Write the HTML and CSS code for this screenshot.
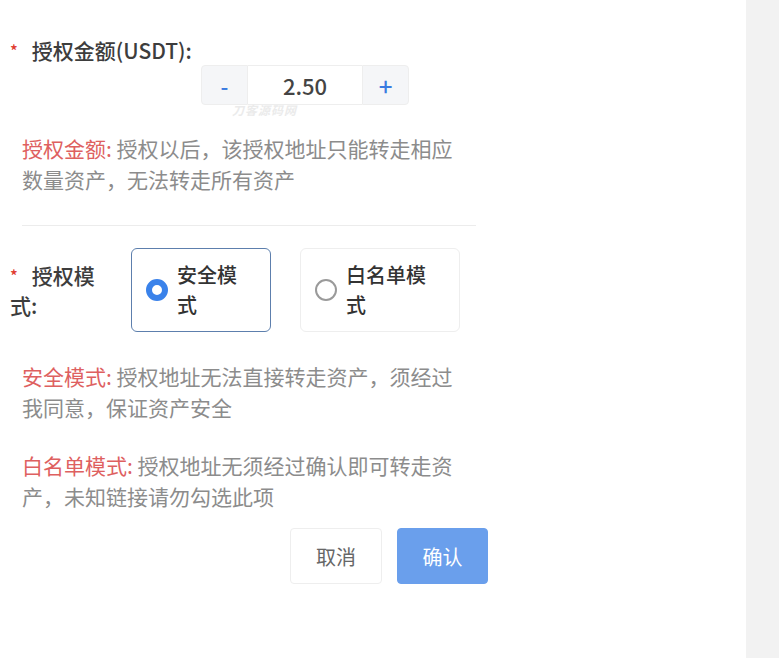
FILE: index.html
```html
<!DOCTYPE html>
<html lang="zh-CN">
<head>
    <meta charset="UTF-8">
    <title>授权</title>
    <meta name="viewport" content="width=device-width, initial-scale=1.0">
    <link rel="stylesheet" href="styles.css">
</head>
<body>

<div class="page">
    <div class="panel">

        <div class="form-item">
            <div class="label"><span class="star">*</span>授权金额(USDT):</div>
            <div class="stepper">
                <button class="step-btn minus">-</button>
                <div class="step-value">2.50</div>
                <button class="step-btn plus">+</button>
            </div>
            <div class="watermark">刀客源码网</div>
        </div>

        <p class="tip"><span class="tip-key">授权金额:</span> 授权以后，该授权地址只能转走相应数量资产，无法转走所有资产</p>

        <div class="divider"></div>

        <div class="form-row">
            <div class="label label-side"><span class="star">*</span>授权模式:</div>
            <div class="radio-group">
                <div class="radio-card checked">
                    <span class="radio-dot"></span>
                    <span class="radio-text">安全模式</span>
                </div>
                <div class="radio-card wide">
                    <span class="radio-dot"></span>
                    <span class="radio-text">白名单模式</span>
                </div>
            </div>
        </div>

        <p class="tip tip-mode"><span class="tip-key">安全模式:</span> 授权地址无法直接转走资产，须经过我同意，保证资产安全</p>

        <p class="tip tip-white"><span class="tip-key">白名单模式:</span> 授权地址无须经过确认即可转走资产，未知链接请勿勾选此项</p>

        <div class="actions">
            <button class="btn btn-cancel">取消</button>
            <button class="btn btn-ok">确认</button>
        </div>

    </div>
    <div class="side"></div>
</div>

</body>
</html>
```

FILE: styles.css
```css
* {
    box-sizing: border-box;
}

body {
    margin: 0;
    background-color: #ffffff;
    font-family: "Noto Sans CJK SC", "Noto Sans", sans-serif;
    color: #333333;
}

.page {
    display: flex;
    min-height: 658px;
}

.panel {
    width: 746px;
    padding: 35px 0 0 10px;
    background-color: #ffffff;
}

.side {
    flex: 1;
    background-color: #f2f2f2;
}

.label {
    font-size: 21px;
    font-weight: 500;
    line-height: 30px;
    color: #3d3d3d;
}

.star {
    color: #e03b30;
    font-size: 16px;
    margin-right: 14px;
    vertical-align: 2px;
}

.stepper {
    display: flex;
    margin: 0 0 0 191px;
    width: 208px;
    height: 40px;
}

.step-btn {
    width: 47px;
    border: 1px solid #eeeeee;
    background-color: #f5f6f8;
    color: #3a7be0;
    font-family: inherit;
    font-size: 24px;
    font-weight: 500;
    padding: 0;
    cursor: pointer;
}

.step-btn.minus {
    border-radius: 4px 0 0 4px;
    font-size: 22px;
}

.step-btn.plus {
    border-radius: 0 4px 4px 0;
}

.step-value {
    flex: 1;
    display: flex;
    align-items: center;
    justify-content: center;
    border-top: 1px solid #eeeeee;
    border-bottom: 1px solid #eeeeee;
    font-size: 22px;
    font-weight: 500;
    color: #444444;
}

.watermark {
    margin: -2px 0 0 222px;
    font-size: 12px;
    line-height: 14px;
    font-style: italic;
    font-weight: 700;
    color: #ebebeb;
    letter-spacing: 1px;
}

.tip {
    margin: 16px 0 0 12px;
    width: 446px;
    font-size: 21px;
    line-height: 31px;
    color: #8c8c8c;
}

.tip-key {
    color: #de6060;
}

.divider {
    margin: 30px 0 0 12px;
    width: 454px;
    height: 1px;
    background-color: #ececec;
}

.form-row {
    display: flex;
    margin-top: 22px;
}

.label-side {
    width: 121px;
    padding: 12px 26px 0 0;
}

.radio-group {
    display: flex;
    gap: 29px;
}

.radio-card {
    display: flex;
    align-items: center;
    width: 140px;
    height: 84px;
    padding: 0 14px;
    border: 1px solid #eeeeee;
    border-radius: 6px;
}

.radio-card.wide {
    width: 160px;
}

.radio-card.checked {
    border-color: #5d7fad;
}

.radio-dot {
    flex: none;
    width: 22px;
    height: 22px;
    border: 2px solid #9a9a9a;
    border-radius: 50%;
    margin-right: 9px;
}

.checked .radio-dot {
    border: 6px solid #3a82ea;
}

.radio-text {
    font-size: 20px;
    line-height: 30px;
    font-weight: 500;
    color: #333333;
}

.radio-card .radio-text {
    width: 64px;
}

.radio-card.wide .radio-text {
    width: 84px;
}

.tip-mode {
    margin-top: 29px;
}

.tip-white {
    margin-top: 27px;
}

.actions {
    display: flex;
    gap: 15px;
    margin: 16px 0 0 280px;
}

.btn {
    width: 92px;
    height: 56px;
    border-radius: 4px;
    font-family: inherit;
    font-size: 20px;
    cursor: pointer;
}

.btn-cancel {
    background-color: #ffffff;
    border: 1px solid #eeeeee;
    color: #666666;
}

.btn-ok {
    width: 91px;
    background-color: #6a9fec;
    border: 1px solid #6a9fec;
    color: #ffffff;
}
```
